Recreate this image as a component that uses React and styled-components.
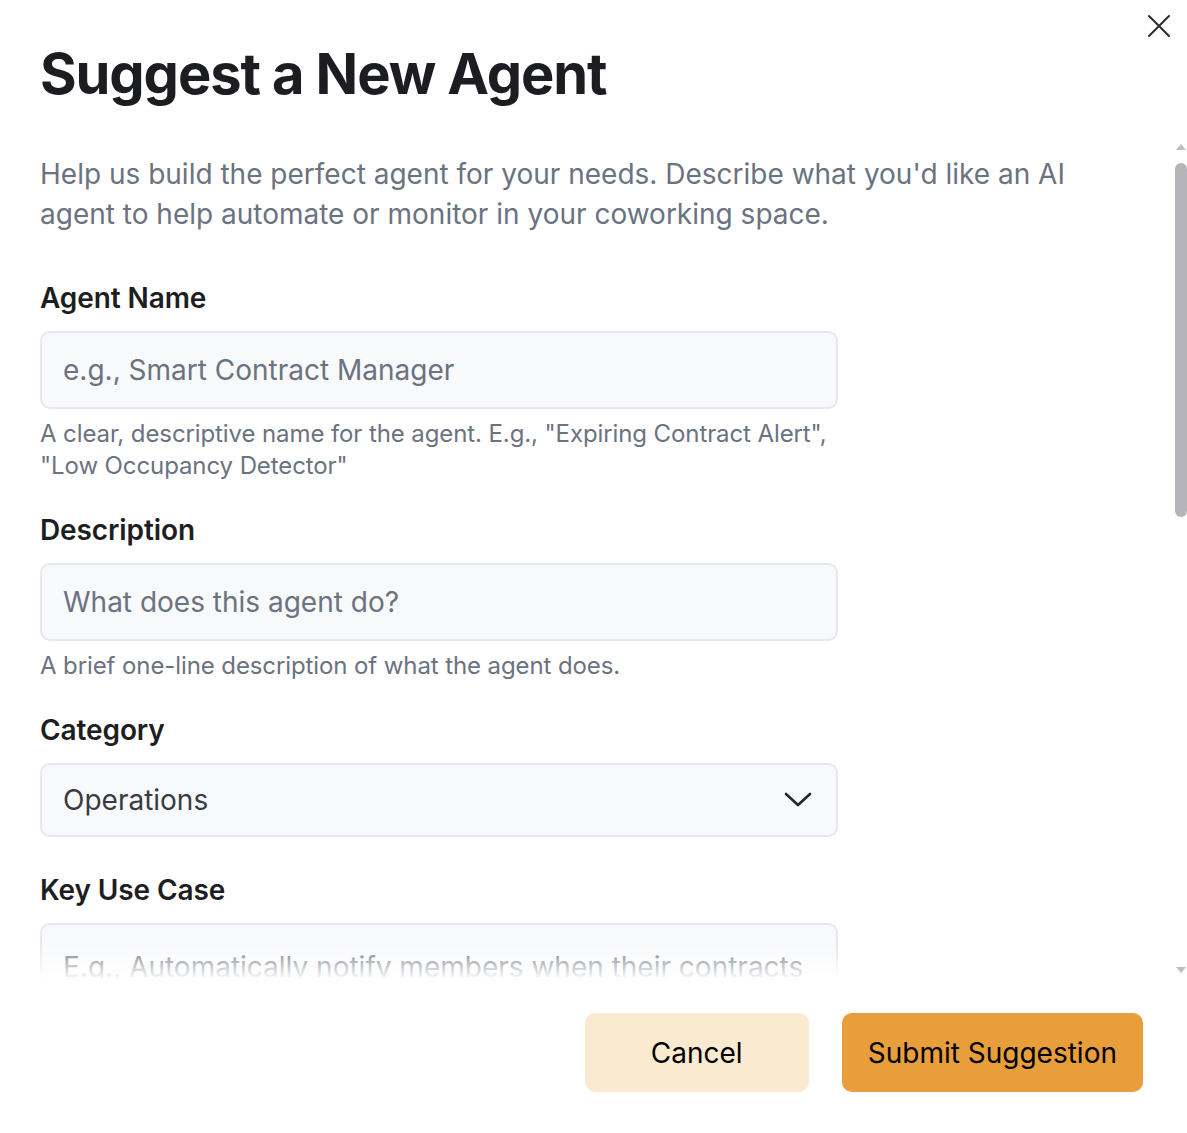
import React from "react";
import styled, { createGlobalStyle } from "styled-components";

const GlobalStyle = createGlobalStyle`
  html, body, #root {
    height: 100%;
  }
  body {
    margin: 0;
    background: #ffffff;
    font-family: Inter, "Noto Sans", sans-serif;
    color: #1c1d21;
  }
  * {
    box-sizing: border-box;
  }
`;

const Dialog = styled.div`
  position: relative;
  height: 100vh;
  display: flex;
  flex-direction: column;
  background: #ffffff;
`;

const Header = styled.header`
  padding: 40px 40px 0;
`;

const Title = styled.h2`
  margin: 0;
  font-size: 56px;
  line-height: 68px;
  font-weight: 700;
  letter-spacing: -1.1px;
  color: #1c1d21;
`;

const CloseButton = styled.button`
  position: absolute;
  top: 11px;
  right: 13px;
  width: 30px;
  height: 30px;
  padding: 0;
  border: none;
  background: transparent;
  display: flex;
  align-items: center;
  justify-content: center;
  color: #2b2c33;
  cursor: pointer;
`;

const BodyWrap = styled.div`
  position: relative;
  flex: 1;
  min-height: 0;
  margin-top: 32px;
  display: flex;
`;

const Body = styled.div`
  flex: 1;
  overflow-y: auto;
  padding: 14px 55px 40px 40px;
  scrollbar-width: none;

  &::-webkit-scrollbar {
    display: none;
  }
`;

const Fade = styled.div`
  position: absolute;
  left: 0;
  right: 15px;
  bottom: 0;
  height: 36px;
  pointer-events: none;
  background: linear-gradient(to bottom, rgba(255, 255, 255, 0), #ffffff);
`;

const Rail = styled.div`
  position: absolute;
  top: 4px;
  bottom: 7px;
  right: 0;
  width: 12px;
  display: flex;
  flex-direction: column;
  align-items: center;
  pointer-events: none;
`;

const Arrow = styled.span`
  width: 0;
  height: 0;
  border-left: 5px solid transparent;
  border-right: 5px solid transparent;
  ${(p) =>
    p.$down
      ? "border-top: 6px solid #bdbdc2; margin-top: auto;"
      : "border-bottom: 6px solid #bdbdc2;"}
`;

const Thumb = styled.span`
  width: 12px;
  margin-top: 13px;
  border-radius: 6px;
  background: #b4b4b9;
`;

const Intro = styled.p`
  margin: 0 0 46px;
  font-size: 28px;
  line-height: 40px;
  color: #6b7280;
`;

const Field = styled.div`
  width: 798px;
  margin-bottom: ${(p) => p.$gap || 30}px;
`;

const Label = styled.label`
  display: block;
  margin-bottom: 15px;
  font-size: 28px;
  line-height: 36px;
  font-weight: 600;
  letter-spacing: -0.1px;
  color: #1d1e22;
`;

const controlBase = `
  width: 100%;
  border: 2px solid #e6e7f0;
  border-radius: 10px;
  background: #f8f9fb;
  font-family: Inter, "Noto Sans", sans-serif;
  font-size: 28px;
  outline: none;
`;

const Input = styled.input`
  ${controlBase}
  display: block;
  height: 78px;
  padding: 0 21px;
  color: #1d1e22;

  &::placeholder {
    color: #6b7280;
  }
`;

const TextArea = styled.textarea`
  ${controlBase}
  display: block;
  height: 200px;
  padding: 22px 21px;
  line-height: 40px;
  resize: none;
  color: #1d1e22;

  &::placeholder {
    color: #6b7280;
  }
`;

const SelectBox = styled.div`
  ${controlBase}
  height: 74px;
  padding: 0 24px 0 21px;
  display: flex;
  align-items: center;
  justify-content: space-between;
  color: #3a3b42;
  cursor: pointer;
`;

const Help = styled.p`
  margin: 9px 0 0;
  font-size: 24px;
  line-height: 32px;
  letter-spacing: -0.1px;
  color: #6b7280;
`;

const Footer = styled.footer`
  display: flex;
  justify-content: flex-end;
  gap: 33px;
  padding: 33px 44px 41px;
`;

const Button = styled.button`
  height: 79px;
  padding: 0 26px;
  min-width: ${(p) => (p.$primary ? "0" : "224px")};
  border: none;
  border-radius: 10px;
  background: ${(p) => (p.$primary ? "#e89e3a" : "#f9ead0")};
  color: #000000;
  font-family: Inter, "Noto Sans", sans-serif;
  font-size: 28px;
  font-weight: 400;
  cursor: pointer;
`;

const CloseIcon = () => (
  <svg width="24" height="24" viewBox="0 0 24 24" fill="none">
    <path d="M2 2 L22 22 M22 2 L2 22" stroke="currentColor" strokeWidth="2" strokeLinecap="round" />
  </svg>
);

const Chevron = () => (
  <svg width="28" height="16" viewBox="0 0 28 16" fill="none">
    <path d="M2 2 L14 13 L26 2" stroke="#27272a" strokeWidth="2.6" strokeLinecap="round" strokeLinejoin="round" />
  </svg>
);

export default function App() {
  return (
    <>
      <GlobalStyle />
      <Dialog>
        <Header>
          <Title>Suggest a New Agent</Title>
        </Header>
        <CloseButton aria-label="Close">
          <CloseIcon />
        </CloseButton>
        <BodyWrap>
          <Body>
            <Intro>
              Help us build the perfect agent for your needs. Describe what you'd like an AI
              agent to help automate or monitor in your coworking space.
            </Intro>
            <Field>
              <Label>Agent Name</Label>
              <Input placeholder="e.g., Smart Contract Manager" />
              <Help>
                A clear, descriptive name for the agent. E.g., "Expiring Contract Alert", "Low
                Occupancy Detector"
              </Help>
            </Field>
            <Field>
              <Label>Description</Label>
              <Input placeholder="What does this agent do?" />
              <Help>A brief one-line description of what the agent does.</Help>
            </Field>
            <Field $gap={35}>
              <Label>Category</Label>
              <SelectBox>
                <span>Operations</span>
                <Chevron />
              </SelectBox>
            </Field>
            <Field>
              <Label>Key Use Case</Label>
              <TextArea placeholder="E.g., Automatically notify members when their contracts are about to expire so they can renew in time." />
            </Field>
          </Body>
          <Fade />
          <Rail>
            <Arrow />
            <Thumb style={{ height: 354 }} />
            <Arrow $down />
          </Rail>
        </BodyWrap>
        <Footer>
          <Button>Cancel</Button>
          <Button $primary>Submit Suggestion</Button>
        </Footer>
      </Dialog>
    </>
  );
}
